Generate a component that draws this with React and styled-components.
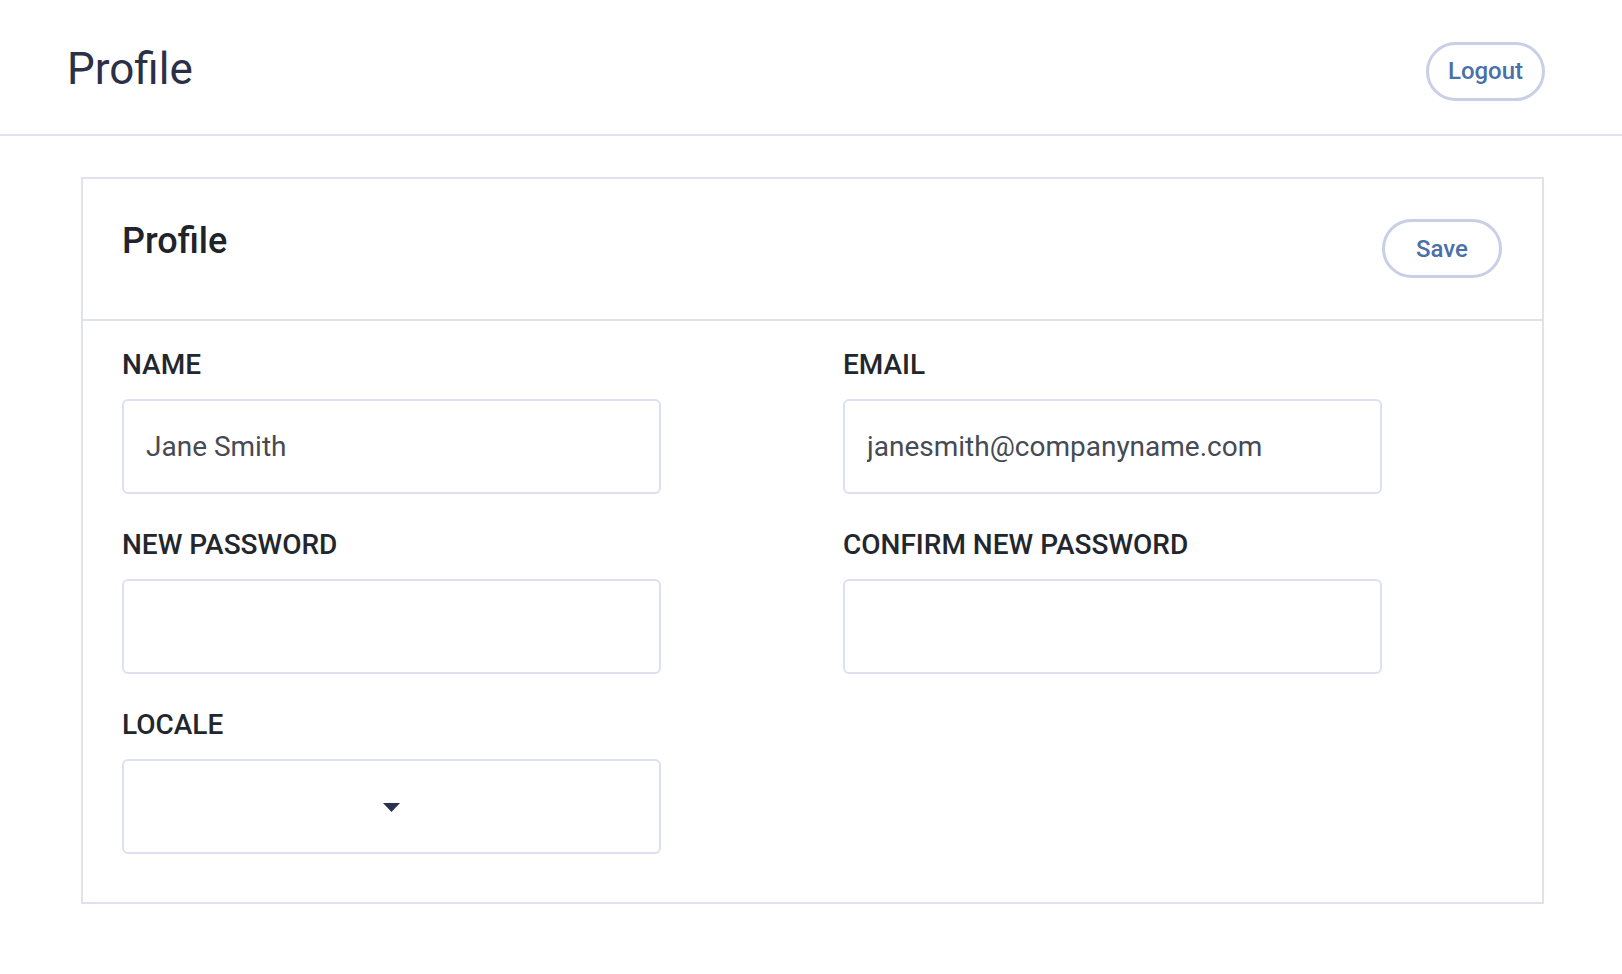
import React from "react";
import styled, { createGlobalStyle } from "styled-components";

const GlobalStyle = createGlobalStyle`
  body {
    margin: 0;
    background: #fff;
    font-family: Roboto, "Liberation Sans", Arial, sans-serif;
  }
  * {
    box-sizing: border-box;
  }
`;

const Page = styled.div`
  min-height: 100vh;
  background: #fff;
`;

const TopBar = styled.header`
  height: 136px;
  display: flex;
  align-items: center;
  justify-content: space-between;
  padding: 0 77px 0 67px;
  border-bottom: 2px solid #dfe1ef;
`;

const PageTitle = styled.h1`
  margin: 3px 0 0;
  font-size: 44px;
  font-weight: 400;
  color: #2b3047;
`;

const PillButton = styled.button`
  width: ${(props) => props.width || "120px"};
  height: 59px;
  margin-top: ${(props) => props.offset || "0px"};
  border: 3px solid #c8cfe6;
  border-radius: 30px;
  background: #fff;
  color: #4a70a8;
  font-family: Roboto, "Liberation Sans", Arial, sans-serif;
  font-size: 24px;
  font-weight: 500;
  cursor: pointer;
  padding: 0;
`;

const Card = styled.section`
  margin: 41px 78px 40px 81px;
  border: 2px solid #dfe1ef;
`;

const CardHeader = styled.div`
  display: flex;
  justify-content: space-between;
  align-items: flex-start;
  padding: 40px 40px 41px 39px;
  border-bottom: 2px solid #dfe1ef;
`;

const CardTitle = styled.h2`
  margin: 1px 0 0;
  font-size: 36px;
  font-weight: 500;
  color: #202329;
`;

const Form = styled.div`
  display: grid;
  grid-template-columns: repeat(2, 539px);
  column-gap: 182px;
  row-gap: 34px;
  padding: 27px 39px 48px;
`;

const Field = styled.div`
  display: flex;
  flex-direction: column;
`;

const Label = styled.label`
  font-size: 28px;
  line-height: 32px;
  font-weight: 500;
  color: #22262d;
  padding-top: 1px;
  margin-bottom: 18px;
`;

const TextInput = styled.input`
  width: 539px;
  height: 95px;
  border: 2px solid #dde0f0;
  border-radius: 6px;
  padding: 0 22px;
  font-family: Roboto, "Liberation Sans", Arial, sans-serif;
  font-size: 28px;
  color: #464a53;
  background: #fff;
  outline: none;
`;

const SelectBox = styled.div`
  width: 539px;
  height: 95px;
  border: 2px solid #dde0f0;
  border-radius: 6px;
  display: flex;
  align-items: center;
  justify-content: center;
  padding-top: 2px;
  cursor: pointer;
`;

const Caret = () => (
  <svg width="17" height="9" viewBox="0 0 17 9">
    <path d="M0 0 H17 L8.5 9 Z" fill="#2c3150" />
  </svg>
);

const fields = [
  { label: "NAME", value: "Jane Smith" },
  { label: "EMAIL", value: "janesmith@companyname.com" },
  { label: "NEW PASSWORD", value: "", type: "password" },
  { label: "CONFIRM NEW PASSWORD", value: "", type: "password" },
];

const App = () => {
  return (
    <Page>
      <GlobalStyle />
      <TopBar>
        <PageTitle>Profile</PageTitle>
        <PillButton width="119px" offset="8px">
          Logout
        </PillButton>
      </TopBar>
      <Card>
        <CardHeader>
          <CardTitle>Profile</CardTitle>
          <PillButton>Save</PillButton>
        </CardHeader>
        <Form>
          {fields.map((f) => (
            <Field key={f.label}>
              <Label>{f.label}</Label>
              <TextInput type={f.type || "text"} defaultValue={f.value} />
            </Field>
          ))}
          <Field>
            <Label>LOCALE</Label>
            <SelectBox>
              <Caret />
            </SelectBox>
          </Field>
        </Form>
      </Card>
    </Page>
  );
};

export default App;
